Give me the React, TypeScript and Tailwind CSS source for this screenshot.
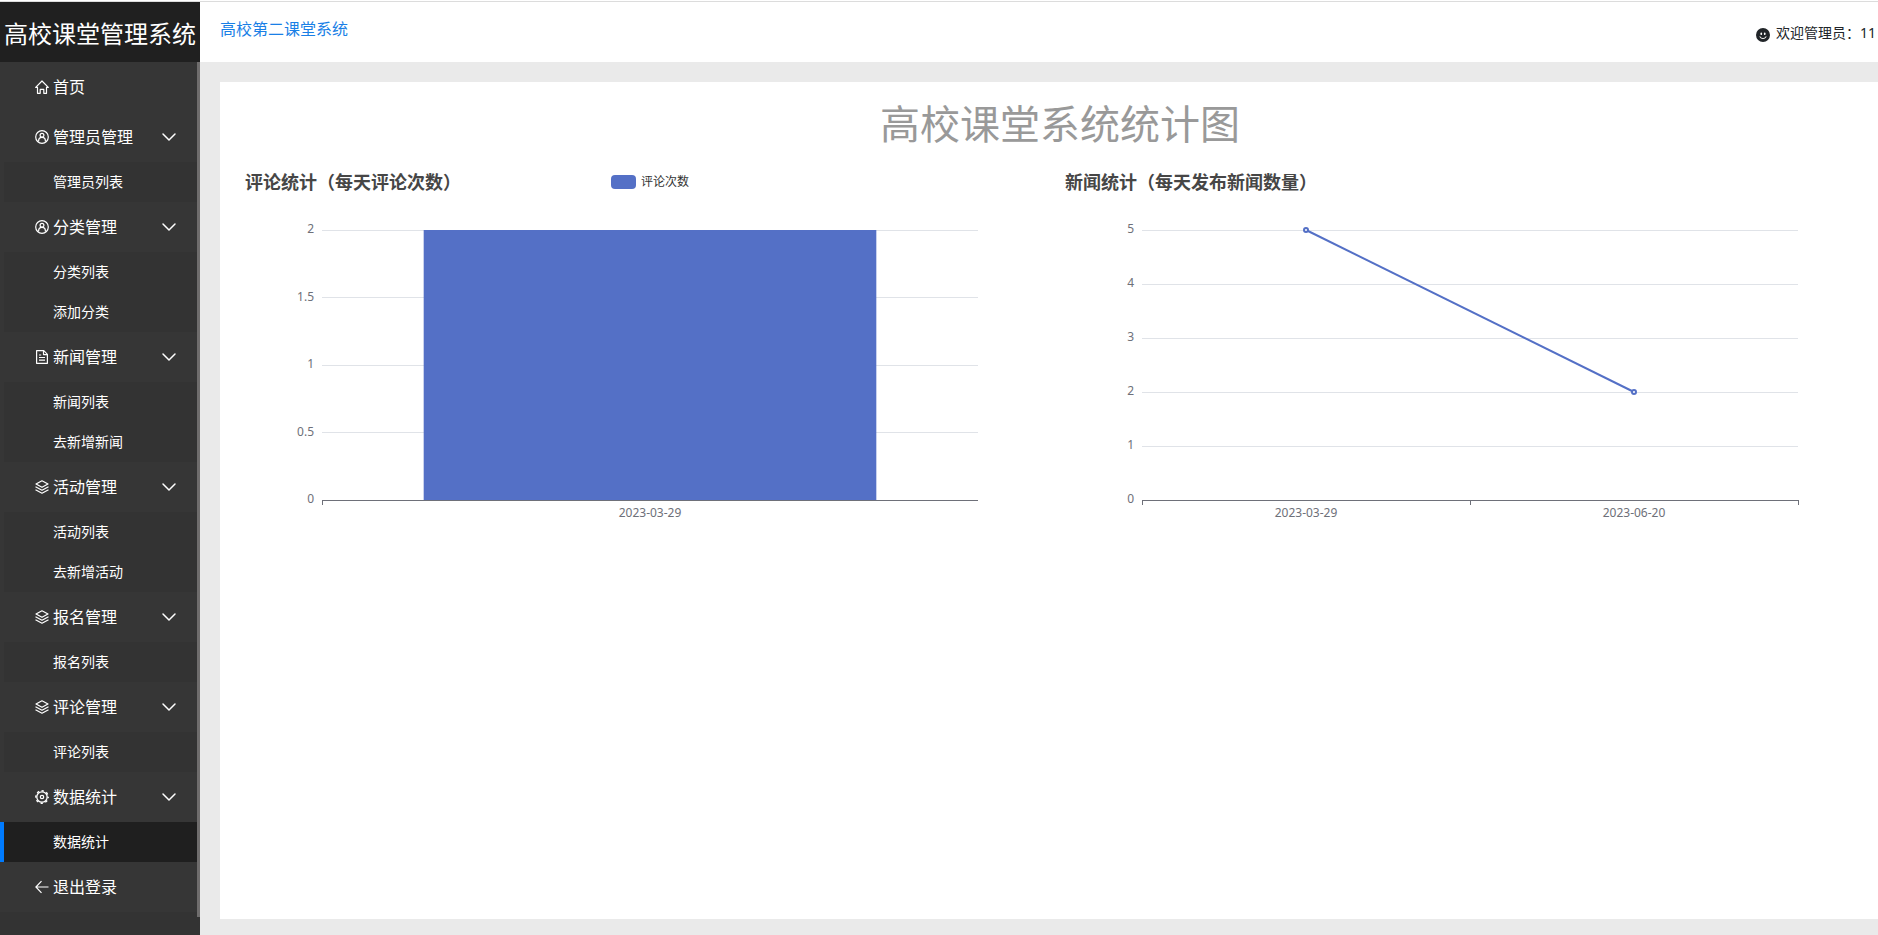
import type { ReactNode } from 'react';
import { ChevronDown } from 'lucide-react';
import { BsEmojiSmileFill } from 'react-icons/bs';

interface MenuGroup {
    title: string;
    icon: ReactNode;
    children?: string[];
}

interface Point {
    label: string;
    value: number;
}

interface ChartProps {
    title: string;
    type: 'bar' | 'line';
    legend?: string;
    data: Point[];
    ticks: number[];
}

function HomeIcon() {
    return (
        <svg viewBox="0 0 14 14" className="w-3.5 h-3.5" fill="none" stroke="currentColor" strokeWidth="1.2" strokeLinejoin="round">
            <path d="M.7 7.4 7 1l6.3 6.4h-1.8v5.9H8.8V9.4H5.2v3.9H2.5V7.4Z" />
        </svg>
    );
}

function UserIcon() {
    return (
        <svg viewBox="0 0 14 14" className="w-3.5 h-3.5" fill="none" stroke="currentColor" strokeWidth="1.2">
            <circle cx="7" cy="7" r="6.3" />
            <circle cx="7" cy="5.2" r="1.9" />
            <path d="M3.6 11.6V11a3.4 3.6 0 0 1 6.8 0v.6" />
        </svg>
    );
}

function FileIcon() {
    return (
        <svg viewBox="0 0 14 14" className="w-3.5 h-3.5" fill="none" stroke="currentColor" strokeWidth="1.2" strokeLinejoin="round">
            <path d="M1.6.7h7.2l3.6 3.6v9H1.6Z" />
            <path d="M8.5.9v3.7h3.7M4 5h2.2M4 7.5h6M4 10.2h6" />
        </svg>
    );
}

function LayersIcon() {
    return (
        <svg viewBox="0 0 14 14" className="w-3.5 h-3.5" fill="none" stroke="currentColor" strokeWidth="1.2" strokeLinejoin="round">
            <path d="M7 .8 13 4 7 7.3 1 4Z" />
            <path d="M.5 6.8 7 10.2l6.5-3.4M.5 9.8 7 13.2l6.5-3.4" />
        </svg>
    );
}

function GearIcon() {
    return (
        <svg viewBox="0 0 14 14" className="w-3.5 h-3.5" fill="none" stroke="currentColor">
            <circle cx="7" cy="7" r="5.2" strokeWidth="1.3" />
            <circle cx="7" cy="7" r="6.2" strokeWidth="1.4" strokeDasharray="2.4 2.47" strokeDashoffset="1.2" />
            <circle cx="7" cy="7" r="1.7" strokeWidth="1.2" />
        </svg>
    );
}

function BackIcon() {
    return (
        <svg viewBox="0 0 14 14" className="w-3.5 h-3.5" fill="none" stroke="currentColor" strokeWidth="1.2">
            <path d="M6.5 1.2.9 7l5.6 5.8M1 7h12.5" />
        </svg>
    );
}

const menu: MenuGroup[] = [
    { title: '首页', icon: <HomeIcon /> },
    { title: '管理员管理', icon: <UserIcon />, children: ['管理员列表'] },
    { title: '分类管理', icon: <UserIcon />, children: ['分类列表', '添加分类'] },
    { title: '新闻管理', icon: <FileIcon />, children: ['新闻列表', '去新增新闻'] },
    { title: '活动管理', icon: <LayersIcon />, children: ['活动列表', '去新增活动'] },
    { title: '报名管理', icon: <LayersIcon />, children: ['报名列表'] },
    { title: '评论管理', icon: <LayersIcon />, children: ['评论列表'] },
    { title: '数据统计', icon: <GearIcon />, children: ['数据统计'] },
    { title: '退出登录', icon: <BackIcon /> },
];

function MenuItem({ group }: { group: MenuGroup }) {
    const label = (
        <>
            {group.icon}
            <span>{group.title}</span>
        </>
    );

    if (!group.children) {
        return (
            <li>
                <a href="#" className="h-[50px] pl-[35px] flex items-center gap-1 text-base text-white">
                    {label}
                </a>
            </li>
        );
    }

    return (
        <li>
            <button type="button" aria-expanded="true" className="w-full h-[50px] pl-[35px] pr-4 flex items-center gap-1 text-base text-white">
                {label}
                <ChevronDown size={24} strokeWidth={1.5} className="ml-auto" />
            </button>
            <ul>
                {group.children.map((child) => {
                    const active = child === '数据统计';
                    return (
                        <li key={child}>
                            <a
                                href="#"
                                className={`h-10 pl-[49px] border-l-4 flex items-center text-sm text-white ${active ? 'bg-[#1f1f1f] border-[#007bff]' : 'bg-[#333333] border-[#363636]'}`}
                            >
                                {child}
                            </a>
                        </li>
                    );
                })}
            </ul>
        </li>
    );
}

function Sidebar() {
    return (
        <aside className="w-[200px] shrink-0 flex flex-col bg-[#333333]">
            <h1 className="h-[60px] pt-1 flex items-center justify-center bg-[#202020] text-white text-2xl whitespace-nowrap">
                高校课堂管理系统
            </h1>
            <div className="flex">
                <nav className="flex-1 bg-[#363636] mb-[5px]">
                    <ul>
                        {menu.map((group) => (
                            <MenuItem key={group.title} group={group} />
                        ))}
                    </ul>
                </nav>
                <div className="w-[3px] bg-[#6f6d6d]" />
            </div>
        </aside>
    );
}

const PLOT_HEIGHT = 270;
const PLOT_LEFT = 10;
const PLOT_WIDTH = 80;

function Chart({ title, type, legend, data, ticks }: ChartProps) {
    const max = Math.max(...ticks);
    const band = PLOT_WIDTH / data.length;
    const y = (value: number) => PLOT_HEIGHT - (value / max) * PLOT_HEIGHT;
    const center = (i: number) => PLOT_LEFT + band * (i + 0.5);
    const boundaries = Array.from({ length: type === 'bar' ? data.length : data.length + 1 }, (_, i) => PLOT_LEFT + band * i);

    return (
        <section className="min-w-0">
            <div className="h-[60px] px-[5px] grid grid-cols-[1fr_auto_1fr] items-start">
                <h3 className="text-lg leading-6 font-bold text-[#464646] whitespace-nowrap">{title}</h3>
                {legend && (
                    <div className="h-6 flex items-center gap-[5px] text-xs text-[#333333]">
                        <span className="w-[25px] h-3.5 rounded bg-[#5470c6]" />
                        {legend}
                    </div>
                )}
            </div>
            <svg width="100%" height="330" className="block overflow-visible" role="img" aria-label={title}>
                {ticks.map((tick) => (
                    <g key={tick}>
                        <line x1="10%" x2="90%" y1={y(tick)} y2={y(tick)} stroke={tick === 0 ? '#6e7079' : '#e0e3e8'} shapeRendering="crispEdges" />
                        <text x="10%" y={y(tick)} dx="-8" dy="3" textAnchor="end" fontSize="12" fill="#6e7079">
                            {tick}
                        </text>
                    </g>
                ))}
                {boundaries.map((x) => (
                    <line key={x} x1={`${x}%`} x2={`${x}%`} y1={PLOT_HEIGHT} y2={PLOT_HEIGHT + 5} stroke="#6e7079" shapeRendering="crispEdges" />
                ))}
                {data.map((point, i) => (
                    <text key={point.label} x={`${center(i)}%`} y={PLOT_HEIGHT + 17} textAnchor="middle" fontSize="12" fill="#6e7079">
                        {point.label}
                    </text>
                ))}
                {type === 'bar' &&
                    data.map((point, i) => (
                        <rect
                            key={point.label}
                            x={`${center(i) - band * 0.345}%`}
                            y={y(point.value)}
                            width={`${band * 0.69}%`}
                            height={PLOT_HEIGHT - y(point.value)}
                            fill="#5470c6"
                        />
                    ))}
                {type === 'line' &&
                    data.slice(1).map((point, i) => (
                        <line
                            key={point.label}
                            x1={`${center(i)}%`}
                            y1={y(data[i].value)}
                            x2={`${center(i + 1)}%`}
                            y2={y(point.value)}
                            stroke="#5470c6"
                            strokeWidth="2"
                        />
                    ))}
                {type === 'line' &&
                    data.map((point, i) => (
                        <circle key={point.label} cx={`${center(i)}%`} cy={y(point.value)} r="2" fill="#fff" stroke="#5470c6" strokeWidth="2" />
                    ))}
            </svg>
        </section>
    );
}

export default function App() {
    return (
        <div className="min-h-screen flex flex-col overflow-x-hidden bg-[#eaeaea] font-['Noto_Sans','Noto_Sans_CJK_SC',sans-serif] text-[#212529]">
            <div className="h-0.5 bg-white border-b border-[#dcdcdc]" />
            <div className="flex-1 flex">
                <Sidebar />
                <div className="flex-1 min-w-0 flex flex-col">
                    <header className="h-[60px] pl-5 pr-0.5 flex items-start justify-between bg-white">
                        <a href="#" className="mt-[15px] text-base leading-6 text-[#1a7fe6]">
                            高校第二课堂系统
                        </a>
                        <div className="mt-[19px] flex items-center gap-1.5 text-sm leading-6">
                            <BsEmojiSmileFill size={14} className="mt-1" />
                            <span>欢迎管理员：11</span>
                        </div>
                    </header>
                    <main className="flex-1 mt-5 ml-5 mb-4 -mr-0.5 pl-5 bg-white">
                        <h2 className="h-[88px] pt-3 text-[40px] leading-[60px] text-center text-[#999999]">高校课堂系统统计图</h2>
                        <div className="grid grid-cols-2">
                            <Chart
                                title="评论统计（每天评论次数）"
                                type="bar"
                                legend="评论次数"
                                data={[{ label: '2023-03-29', value: 2 }]}
                                ticks={[0, 0.5, 1, 1.5, 2]}
                            />
                            <Chart
                                title="新闻统计（每天发布新闻数量）"
                                type="line"
                                data={[
                                    { label: '2023-03-29', value: 5 },
                                    { label: '2023-06-20', value: 2 },
                                ]}
                                ticks={[0, 1, 2, 3, 4, 5]}
                            />
                        </div>
                    </main>
                </div>
            </div>
        </div>
    );
}
